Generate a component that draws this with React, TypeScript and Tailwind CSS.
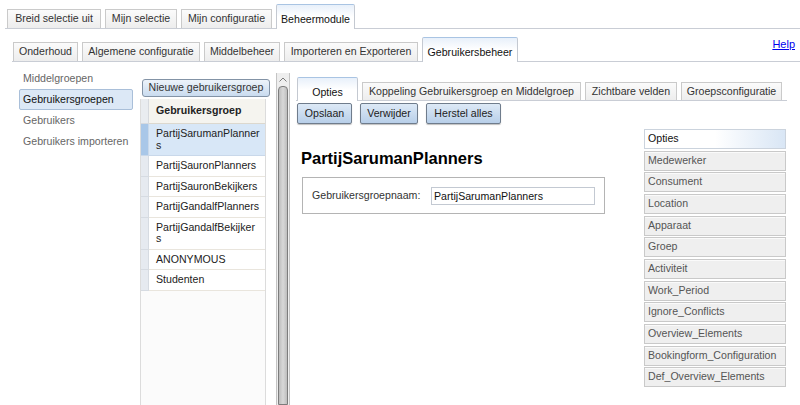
import React from 'react';

type TabDef = { label: string; w: string; active?: boolean };

const topTabs: TabDef[] = [
  { label: 'Breid selectie uit', w: 'w-[94px]' },
  { label: 'Mijn selectie', w: 'w-[72px]' },
  { label: 'Mijn configuratie', w: 'w-[91px]' },
  { label: 'Beheermodule', w: 'w-[79px]', active: true },
];

const subTabs: TabDef[] = [
  { label: 'Onderhoud', w: 'w-[65px]' },
  { label: 'Algemene configuratie', w: 'w-[118px]' },
  { label: 'Middelbeheer', w: 'w-[76px]' },
  { label: 'Importeren en Exporteren', w: 'w-[134px]' },
  { label: 'Gebruikersbeheer', w: 'w-[96px]', active: true },
];

const contentTabs: TabDef[] = [
  { label: 'Opties', w: 'w-[61px]', active: true },
  { label: 'Koppeling Gebruikersgroep en Middelgroep', w: 'w-[219px]' },
  { label: 'Zichtbare velden', w: 'w-[92px]' },
  { label: 'Groepsconfiguratie', w: 'w-[101px]' },
];

const navItems = ['Middelgroepen', 'Gebruikersgroepen', 'Gebruikers', 'Gebruikers importeren'];

// second part of a name goes on its own line, as in the narrow column
const groups: { name: string; rest?: string }[] = [
  { name: 'PartijSarumanPlanner', rest: 's' },
  { name: 'PartijSauronPlanners' },
  { name: 'PartijSauronBekijkers' },
  { name: 'PartijGandalfPlanners' },
  { name: 'PartijGandalfBekijker', rest: 's' },
  { name: 'ANONYMOUS' },
  { name: 'Studenten' },
];

const sections = [
  'Opties',
  'Medewerker',
  'Consument',
  'Location',
  'Apparaat',
  'Groep',
  'Activiteit',
  'Work_Period',
  'Ignore_Conflicts',
  'Overview_Elements',
  'Bookingform_Configuration',
  'Def_Overview_Elements',
];

const Tab: React.FC<{ tab: TabDef; tall: string; short: string; pad: string }> = ({ tab, tall, short, pad }) =>
  tab.active ? (
    <div
      className={`${tab.w} ${tall} ${pad} -mb-px shrink-0 flex items-end justify-center whitespace-nowrap leading-[13px] border border-b-0 border-[#c4c9d1] border-t-[#a9c4e3] bg-linear-to-b from-[#e8f0fa] via-white to-white text-[#111] rounded-t-[2px]`}
    >
      {tab.label}
    </div>
  ) : (
    <div
      className={`${tab.w} ${short} ${pad} shrink-0 flex items-end justify-center whitespace-nowrap leading-[13px] border border-b-0 border-[#cacaca] bg-linear-to-b from-[#fbfbfb] to-[#ededed] text-[#333]`}
    >
      {tab.label}
    </div>
  );

export default function App() {
  return (
    <div className="w-[800px] h-[405px] bg-white overflow-hidden flex flex-col font-['Liberation_Sans',Arial,sans-serif] text-[10.6px] text-[#333]">
      {/* Main module tabs */}
      <div className="h-[29px] ml-[5px] pl-[2px] flex items-end gap-[4px] border-b border-[#c9cdd5]">
        {topTabs.map((t) => (
          <Tab key={t.label} tab={t} tall="h-[25px]" short="h-[19px]" pad="pb-[3px]" />
        ))}
      </div>

      {/* Sub tabs + help */}
      <div className="h-[33px] ml-[12px] pl-[1px] flex items-end gap-[4px] border-b border-[#c9cdd5]">
        {subTabs.map((t) => (
          <Tab key={t.label} tab={t} tall="h-[25px]" short="h-[19px]" pad="pb-[3px]" />
        ))}
        <a href="#" className="self-start mt-[9px] ml-auto mr-[5px] leading-[13px] text-[11px] text-[#0000ee] underline">
          Help
        </a>
      </div>

      <div className="flex-1 min-h-0 flex">
        {/* Left navigation */}
        <div className="w-[140px] shrink-0 pl-[19px] pt-[6px] flex flex-col">
          {navItems.map((n) => (
            <div
              key={n}
              className={
                n === 'Gebruikersgroepen'
                  ? 'w-[114px] h-[21px] pl-[3px] flex items-center whitespace-nowrap border border-[#a9bfd9] rounded-[2px] bg-[#dce8f6] text-[#111]'
                  : 'w-[114px] h-[21px] pl-[3px] flex items-center whitespace-nowrap border border-transparent text-[#666]'
              }
            >
              {n}
            </div>
          ))}
        </div>

        {/* Group list */}
        <div className="w-[136px] shrink-0 pt-[17px] flex flex-col">
          <div className="ml-[2px] w-[128px] h-[18px] flex items-center justify-center whitespace-nowrap border border-[#8393a6] rounded-[3px] bg-linear-to-b from-[#edf3fa] to-[#c9dbef] text-[#333]">
            Nieuwe gebruikersgroep
          </div>
          <div className="mt-[2px] w-[126px] flex-1 border-x border-[#dcdcdc] bg-[#fbfbfb] flex flex-col">
            <div className="h-[25px] flex">
              <div className="w-[8px] bg-[#e9ecf0] border-r border-b border-[#d6d9de]" />
              <div className="flex-1 pl-[7px] flex items-center font-bold text-[#222] bg-[#f5f4ef] border-b border-[#dcd8ce]">
                Gebruikersgroep
              </div>
            </div>
            {groups.map((g, i) => (
              <div key={g.name} className="flex">
                <div
                  className={
                    i === 0
                      ? 'w-[8px] bg-[#a9c7e8] border-r border-b border-[#c9d8ea]'
                      : 'w-[8px] bg-[#e6eaf0] border-r border-b border-[#d6dbe2]'
                  }
                />
                <div
                  className={
                    i === 0
                      ? 'flex-1 pl-[7px] py-[4px] leading-[11.5px] whitespace-nowrap bg-[#d8e7f7] border-b border-[#c9d8ea] text-[#222]'
                      : 'flex-1 pl-[7px] py-[4px] leading-[11.5px] whitespace-nowrap bg-white border-b border-[#e9e5dd] text-[#222]'
                  }
                >
                  {g.name}
                  {g.rest && (
                    <>
                      <br />
                      {g.rest}
                    </>
                  )}
                </div>
              </div>
            ))}
          </div>
        </div>

        {/* Scrollbar */}
        <div className="w-[14px] mt-[11px] shrink-0 flex flex-col bg-[#eeeeee] border-x border-[#c4c4c4]">
          <div className="h-[13px] flex items-center justify-center">
            <svg width="8" height="5" viewBox="0 0 8 5">
              <path d="M0.5 4.5 L4 1 L7.5 4.5" stroke="#7a7a7a" strokeWidth="1" fill="none" />
            </svg>
          </div>
          <div className="flex-1 mx-[1px] rounded-t-[4px] border border-[#7c7c7c] bg-linear-to-r from-[#bdbdbd] via-[#d8d8d8] to-[#bdbdbd]" />
        </div>

        {/* Content */}
        <div className="flex-1 ml-[6px] mr-[13px] flex flex-col">
          <div className="h-[39px] pl-[1px] flex items-end gap-[4px] border-b border-[#c9cdd5]">
            {contentTabs.map((t) => (
              <Tab key={t.label} tab={t} tall="h-[24px]" short="h-[18px]" pad="pb-[2px]" />
            ))}
          </div>

          <div className="mt-[2px] h-[21px] pl-[1px] flex gap-[8px]">
            {[
              { l: 'Opslaan', w: 'w-[55px]' },
              { l: 'Verwijder', w: 'w-[58px]' },
              { l: 'Herstel alles', w: 'w-[75px]' },
            ].map((b) => (
              <div
                key={b.l}
                className={`${b.w} h-[21px] flex items-center justify-center border border-[#6f7c8c] rounded-[2px] bg-linear-to-b from-[#dde9f6] to-[#b8cfe9] text-[#222] shadow-[0_1px_1px_rgba(0,0,0,0.25)]`}
              >
                {b.l}
              </div>
            ))}
          </div>

          <div className="flex-1 flex">
            <div className="flex-1 pt-[24px]">
              <h1 className="ml-[5px] h-[20px] leading-[20px] text-[16.5px] font-bold text-black">PartijSarumanPlanners</h1>
              <div className="mt-[9px] ml-[6px] w-[303px] h-[37px] pl-[9px] flex items-center border border-[#b4b4b4]">
                <span className="w-[119px] text-[#333]">Gebruikersgroepnaam:</span>
                <input
                  readOnly
                  defaultValue="PartijSarumanPlanners"
                  className="w-[164px] h-[18px] px-[2px] border border-[#c3c9d2] text-[10.6px] text-[#111] outline-none"
                />
              </div>
            </div>

            <div className="w-[142px] mr-[1px] mt-[5px] flex flex-col gap-[1.67px]">
              {sections.map((s, i) => (
                <div
                  key={s}
                  className={
                    i === 0
                      ? 'h-[20px] pl-[3px] flex items-center border border-[#cbd3dd] bg-linear-to-r from-white via-white to-[#d9e6f5] text-[#111]'
                      : 'h-[20px] pl-[3px] flex items-center border border-[#c9c9c9] bg-[#efefef] text-[#555] shadow-[inset_0_1px_0_#fafafa]'
                  }
                >
                  {s}
                </div>
              ))}
            </div>
          </div>
        </div>
      </div>
    </div>
  );
}
